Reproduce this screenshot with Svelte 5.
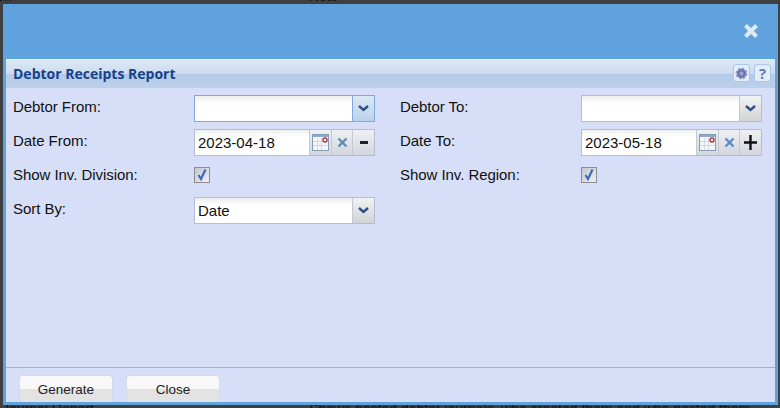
<script>
  const leftRows = [
    { label: 'Debtor From:', kind: 'select', value: '', focused: true },
    { label: 'Date From:', kind: 'date', value: '2023-04-18', step: 'minus' },
    { label: 'Show Inv. Division:', kind: 'check' },
    { label: 'Sort By:', kind: 'select', value: 'Date' }
  ];
  const rightRows = [
    { label: 'Debtor To:', kind: 'select', value: '' },
    { label: 'Date To:', kind: 'date', value: '2023-05-18', step: 'plus' },
    { label: 'Show Inv. Region:', kind: 'check' }
  ];
</script>

{#snippet field(row)}
  <div class="row">
    <span class="label">{row.label}</span>
    {#if row.kind === 'select'}
      <div class="combo" class:focused={row.focused}>
        <span class="value">{row.value}</span>
        <span class="arrow">
          <svg width="11" height="7" viewBox="0 0 11 7"><path d="M1 1 L5.5 5 L10 1" fill="none" stroke="#2c4f8f" stroke-width="2.4" /></svg>
        </span>
      </div>
    {:else if row.kind === 'date'}
      <div class="combo">
        <span class="value">{row.value}</span>
        <span class="btn cal">
          <svg width="17" height="17" viewBox="0 0 17 17">
            <rect x="0.5" y="0.5" width="16" height="16" fill="#f4f6fa" stroke="#7f9db9" />
            <rect x="1" y="1" width="15" height="2" fill="#8fa9c6" />
            <path d="M1 7.5H16M1 11.5H16M5.5 4V16M9.5 4V16" stroke="#d3d8e2" />
            <circle cx="13" cy="6" r="2" fill="#fff" stroke="#b5333f" stroke-width="1.4" />
          </svg>
        </span>
        <span class="btn clear">
          <svg width="11" height="11" viewBox="0 0 11 11"><path d="M1.5 1.5 L9.5 9.5 M9.5 1.5 L1.5 9.5" stroke="#5a8bc0" stroke-width="2.4" /></svg>
        </span>
        <span class="btn step">
          {#if row.step === 'minus'}
            <svg width="8" height="3" viewBox="0 0 8 3"><rect width="8" height="3" fill="#222" /></svg>
          {:else}
            <svg width="13" height="15" viewBox="0 0 13 15"><path d="M6.5 0V15M0 7.5H13" stroke="#111" stroke-width="2.4" /></svg>
          {/if}
        </span>
      </div>
    {:else}
      <span class="check">
        <svg width="12" height="13" viewBox="0 0 12 13"><path d="M2.5 7 L5 11 L9.5 1.5" fill="none" stroke="#3f68b5" stroke-width="2.2" /></svg>
      </span>
    {/if}
  </div>
{/snippet}

<div class="page">
  <div class="behind top-a">ion</div>
  <div class="behind top-b">Note</div>
  <div class="behind bottom-a">Journal Report</div>
  <div class="behind bottom-b">Shows posted debtor journals, who created them and who posted them</div>

  <div class="window">
    <header class="head">
      <svg class="close" width="16" height="16" viewBox="0 0 16 16"><path d="M2.5 2.5 L13.5 13.5 M13.5 2.5 L2.5 13.5" stroke="#dfeaf6" stroke-width="4" /></svg>
    </header>
    <section class="panel">
      <div class="title">
        <span>Debtor Receipts Report</span>
        <div class="tools">
          <span class="tool">
            <svg width="13" height="13" viewBox="0 0 13 13">
              <circle cx="6.5" cy="6.5" r="4.8" fill="#6f79b6" />
              <circle cx="6.5" cy="6.5" r="5.4" fill="none" stroke="#8f98cb" stroke-width="1.2" stroke-dasharray="2.4 1.8" />
              <circle cx="6.5" cy="6.5" r="1.8" fill="#a3abd8" />
            </svg>
          </span>
          <span class="tool q">?</span>
        </div>
      </div>
      <div class="form">
        <div class="column">
          {#each leftRows as row}
            {@render field(row)}
          {/each}
        </div>
        <div class="column">
          {#each rightRows as row}
            {@render field(row)}
          {/each}
        </div>
      </div>
      <footer class="foot">
        <button>Generate</button>
        <button>Close</button>
      </footer>
    </section>
  </div>
</div>

<style>
  :global(body) {
    margin: 0;
  }
  .page {
    width: 780px;
    height: 408px;
    overflow: hidden;
    background: #404040;
    font-family: "Liberation Sans", Arial, sans-serif;
    font-size: 15px;
    color: #111;
    padding-top: 4px;
    padding-left: 3px;
    box-sizing: border-box;
    position: relative;
  }
  .behind {
    position: absolute;
    color: #161616;
    font-size: 14px;
    line-height: 16px;
    white-space: nowrap;
  }
  .top-a { left: -7px; top: -12px; }
  .top-b { left: 309px; top: -12px; }
  .bottom-a { left: 2px; top: 401px; }
  .bottom-b { left: 309px; top: 401px; }

  .window {
    position: relative;
    width: 775px;
    height: 401px;
    background: #5fa2dd;
    display: flex;
    flex-direction: column;
  }
  .head {
    height: 55px;
    flex: none;
    display: flex;
    justify-content: flex-end;
    align-items: flex-start;
    padding: 19px 19px 0 0;
    box-sizing: border-box;
  }
  .panel {
    flex: 1;
    margin: 0 3px 3px 3px;
    background: #d6dff7;
    display: flex;
    flex-direction: column;
    min-height: 0;
  }
  .title {
    height: 29px;
    flex: none;
    box-sizing: border-box;
    padding: 0 4px 2px 7px;
    border-top: 1px solid #e8f1fb;
    background: linear-gradient(#dde8f5 0, #cddcf0 48%, #b4cae8 50%, #bcd0ea 100%);
    display: flex;
    align-items: center;
    justify-content: space-between;
    font-family: "Open Sans", sans-serif;
    font-weight: 700;
    font-size: 14px;
    color: #15428b;
  }
  .tools {
    display: flex;
    gap: 4px;
  }
  .tool {
    width: 15px;
    height: 16px;
    border: 1px solid #a9c8ec;
    border-radius: 3px;
    background: #e4edf9;
    display: flex;
    align-items: center;
    justify-content: center;
    font-size: 15px;
    font-weight: 700;
    color: #5c7cb0;
  }
  .form {
    flex: 1;
    padding: 7px 7px 0;
    display: flex;
    gap: 25px;
  }
  .column {
    display: flex;
    flex-direction: column;
    gap: 7px;
  }
  .row {
    display: flex;
    align-items: center;
    height: 27px;
    width: 362px;
  }
  .label {
    width: 181px;
    flex: none;
    position: relative;
    top: -2px;
    letter-spacing: -0.05px;
  }
  .combo {
    width: 181px;
    height: 27px;
    box-sizing: border-box;
    border: 1px solid #b5bdd3;
    display: flex;
    background: #fff;
  }
  .combo.focused {
    border-color: #7eaadd;
  }
  .value {
    flex: 1;
    min-width: 0;
    padding: 0 3px;
    line-height: 26px;
    background: linear-gradient(#eceeee 0, #fff 7px);
  }
  .arrow {
    width: 21px;
    flex: none;
    border-left: 1px solid #c3c8d4;
    background: linear-gradient(#f1f2f2, #d2d3d3);
    display: flex;
    align-items: center;
    justify-content: center;
  }
  .focused .arrow {
    border-left-color: #7eaadd;
    background: linear-gradient(#dce8f5, #bbd2eb);
  }
  .btn {
    flex: none;
    border-left: 1px solid #c3c8d4;
    background: linear-gradient(#eef0f3, #d3d6dd);
    display: flex;
    align-items: center;
    justify-content: center;
  }
  .cal { width: 21px; }
  .clear { width: 20px; }
  .step { width: 21px; }
  .check {
    width: 14px;
    height: 14px;
    border: 1px solid #8d8d8d;
    background: linear-gradient(135deg, #c4c7d2, #eef0f4);
    display: flex;
    align-items: center;
    justify-content: center;
    position: relative;
    top: -2px;
  }
  .foot {
    height: 35px;
    flex: none;
    box-sizing: border-box;
    border-top: 1px solid #8db8e6;
    padding: 7px 0 0 13px;
    display: flex;
    gap: 13px;
    align-items: flex-start;
  }
  button {
    width: 94px;
    height: 27px;
    box-sizing: border-box;
    border: 1px solid #d5dae8;
    border-bottom: none;
    border-radius: 4px 4px 0 0;
    background: linear-gradient(#f8f8f8 0, #f8f8f8 50%, #e3e3e3 50%, #e3e3e3 100%);
    font-family: "Liberation Sans", Arial, sans-serif;
    font-size: 13.5px;
    color: #222;
    padding: 0;
  }
</style>
